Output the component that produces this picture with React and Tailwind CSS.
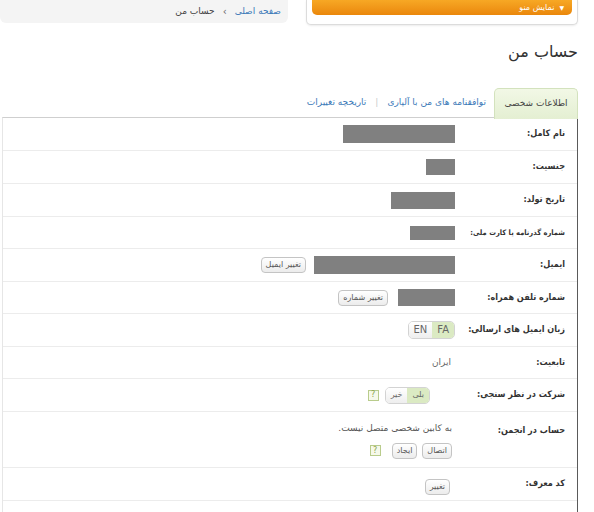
import React from "react";

const font = { fontFamily: '"DejaVu Sans", Tahoma, sans-serif' };
const condensed = { fontFamily: '"DejaVu Sans Condensed", "DejaVu Sans", Tahoma, sans-serif' };

function Block({ w, h }) {
  return <div className={`bg-[#808080] ${w} ${h}`} />;
}

function SmallButton({ children }) {
  return (
    <span className="inline-flex items-center h-[16px] px-[4px] rounded-[4px] border border-[#c4c4c4] bg-gradient-to-b from-white to-[#ececec] text-[8px] text-[#555] leading-none">
      {children}
    </span>
  );
}

function Help() {
  return (
    <span className="inline-flex items-center justify-center w-[11px] h-[11px] border border-[#b9cc8c] bg-[#f6f9ea] text-[8px] text-[#8aa24c] leading-none">
      ?
    </span>
  );
}

function Toggle({ left, right }) {
  return (
    <span className="inline-flex h-[18px] rounded-[5px] border border-[#d3d3d3] overflow-hidden text-[10px] text-[#666] leading-none">
      <span className="flex items-center px-[5px] bg-[#dbeac3]">{right}</span>
      <span className="flex items-center px-[5px] bg-gradient-to-b from-white to-[#eee]">{left}</span>
    </span>
  );
}

function Row({ label, h = "h-[33px]", top, small, children }) {
  return (
    <div className={`flex border-b border-[#ececec] ${h}`}>
      <div
        style={condensed}
        className={`w-[112px] shrink-0 pr-[12px] font-bold text-[#333] whitespace-nowrap flex ${
          small ? "text-[7.5px]" : "text-[9px]"
        } ${top ? "items-start pt-[12px]" : "items-center"}`}
      >
        {label}
      </div>
      <div className={`flex-1 pr-[10px] flex ${top ? "items-start" : "items-center"}`}>{children}</div>
    </div>
  );
}

export default function App() {
  return (
    <div dir="rtl" className="w-[594px] h-[512px] bg-white overflow-hidden pr-[16px]" style={font}>
      {/* top strip */}
      <div className="flex gap-[18px] h-[25px]">
        <div className="w-[273px] h-[25px] bg-white border border-t-0 border-[#dcdcdc] rounded-b-[5px] shadow-[0_1px_2px_rgba(0,0,0,0.08)] px-[5px]">
          <div className="h-[15px] rounded-b-[5px] bg-gradient-to-b from-[#f7a824] to-[#ea870a] flex items-center pr-[8px] gap-[5px] text-white text-[8px] leading-none">
            <span className="text-[6px]">▼</span>
            <span>نمایش منو</span>
          </div>
        </div>
        <div className="w-[289px] h-[23px] bg-[#f4f4f4] rounded-bl-[6px] rounded-br-[6px] flex items-center pr-[7px] gap-[8px] text-[9px]">
          <span className="text-[#3b79b8]">صفحه اصلی</span>
          <span className="text-[#666] text-[10px]">›</span>
          <span className="text-[#444]">حساب من</span>
        </div>
      </div>

      {/* title */}
      <h1 className="mt-[19px] text-[16px] text-[#333] leading-none h-[24px]">حساب من</h1>

      {/* tabs */}
      <div className="mt-[20px] flex items-end h-[30px] pl-[3px]">
        <div className="h-[31px] mb-[-1px] w-[84px] rounded-t-[5px] border border-b-0 border-[#d3e2bd] bg-gradient-to-b from-[#f2f8e6] to-[#e4efd2] flex items-center justify-center text-[9px] text-[#444] relative z-10">
          اطلاعات شخصی
        </div>
        <div className="flex-1 h-full flex items-center gap-[9px] pr-[8px] text-[9px] border-b border-[#cfcfcf]">
          <span className="text-[#3b79b8]">توافقنامه های من با آلپاری</span>
          <span className="text-[#ccc]">|</span>
          <span className="text-[#3b79b8]">تاریخچه تغییرات</span>
        </div>
      </div>

      {/* panel */}
      <div className="ml-[2px] border-r border-r-[#5a5a5a] border-l border-l-[#e6e6e6] border-t border-t-[#cfcfcf] -mt-px">
        <Row label="نام کامل:" h="h-[33px]">
          <Block w="w-[112px]" h="h-[18px]" />
        </Row>
        <Row label="جنسیت:">
          <Block w="w-[29px]" h="h-[16px]" />
        </Row>
        <Row label="تاریخ تولد:">
          <Block w="w-[64px]" h="h-[17px]" />
        </Row>
        <Row label="شماره گذرنامه یا کارت ملی:" h="h-[32px]" small>
          <Block w="w-[45px]" h="h-[14px]" />
        </Row>
        <Row label="ایمیل:">
          <div className="flex items-center gap-[8px]">
            <Block w="w-[141px]" h="h-[18px]" />
            <SmallButton>تغییر ایمیل</SmallButton>
          </div>
        </Row>
        <Row label="شماره تلفن همراه:" h="h-[32px]">
          <div className="flex items-center gap-[10px]">
            <Block w="w-[57px]" h="h-[17px]" />
            <SmallButton>تغییر شماره</SmallButton>
          </div>
        </Row>
        <Row label="زبان ایمیل های ارسالی:">
          <Toggle right="FA" left="EN" />
        </Row>
        <Row label="تابعیت:" h="h-[32px]">
          <span className="text-[9px] text-[#666] pr-[4px]">ایران</span>
        </Row>
        <Row label="شرکت در نظر سنجی:">
          <div className="flex items-center gap-[6px] pr-[25px]">
            <span className="inline-flex h-[17px] rounded-[5px] border border-[#d3d3d3] overflow-hidden text-[8px] text-[#666] leading-none">
              <span className="flex items-center px-[5px] bg-[#dbeac3]">بلی</span>
              <span className="flex items-center px-[5px] bg-gradient-to-b from-white to-[#eee]">خیر</span>
            </span>
            <Help />
          </div>
        </Row>
        <Row label="حساب در انجمن:" h="h-[56px]" top>
          <div className="flex flex-col pt-[10px] gap-[7px]">
            <span className="text-[9px] text-[#555] pr-[3px]">به کابین شخصی متصل نیست.</span>
            <div className="flex items-center gap-[5px] pr-[3px]">
              <SmallButton>اتصال</SmallButton>
              <SmallButton>ایجاد</SmallButton>
              <span className="mr-[6px] flex items-center">
                <Help />
              </span>
            </div>
          </div>
        </Row>
        <Row label="کد معرف:">
          <span className="pr-[5px]">
            <SmallButton>تغییر</SmallButton>
          </span>
        </Row>
        <div className="h-[20px]" />
      </div>
    </div>
  );
}
